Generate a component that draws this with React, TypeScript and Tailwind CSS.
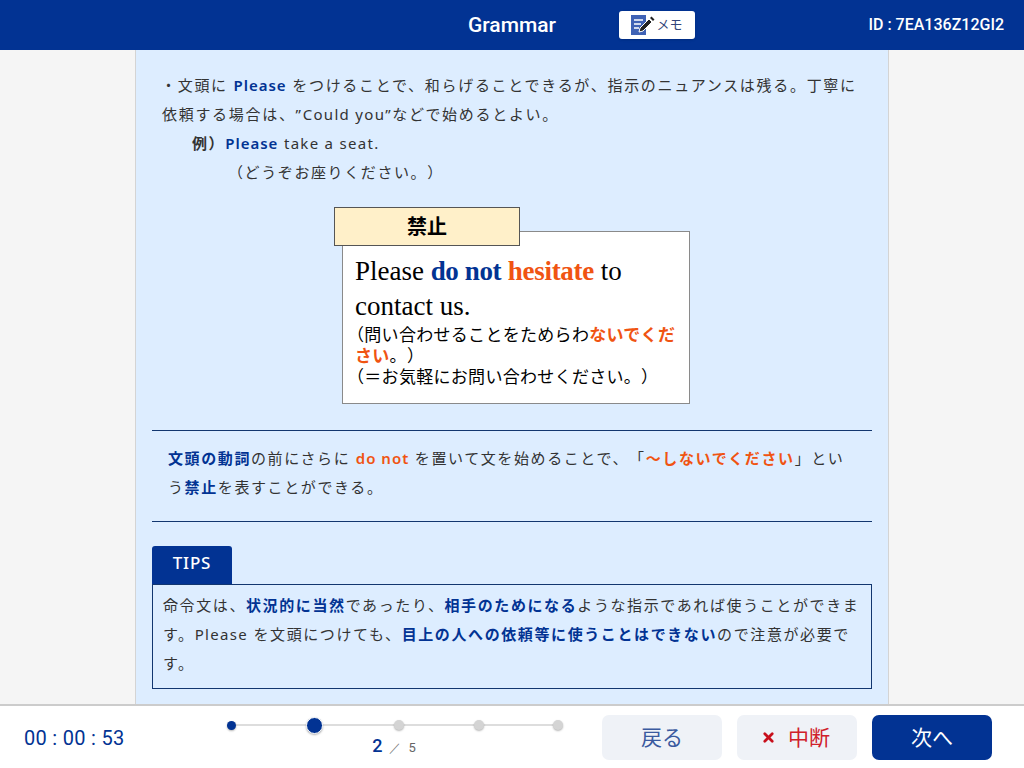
import { X } from "lucide-react";

const jp = "font-['Noto_Sans','Noto_Sans_CJK_JP',sans-serif]";

function MemoIcon() {
  return (
    <svg width="24" height="22" viewBox="0 0 24 22">
      <rect x="0" y="1" width="15" height="20" fill="#3f62b5" />
      <path d="M3 6h9M3 10h7M3 14h5" stroke="#fff" strokeWidth="1.5" />
      <path d="M8 18l1-4 9-9 3 3-9 9z" fill="#222" stroke="#fff" strokeWidth="1" />
      <path d="M19 4l1.5-1.5 3 3L22 7z" fill="#222" />
    </svg>
  );
}

function Dot({ className }: { className: string }) {
  return <span className={`z-10 rounded-full shadow-[0_1px_2px_rgba(0,0,0,0.3)] ${className}`} />;
}

export default function App() {
  return (
    <div className={`flex h-[768px] w-[1024px] flex-col overflow-hidden bg-[#f5f5f5] text-[#222] [text-spacing-trim:space-all] ${jp}`}>
      <header className="flex h-[50px] shrink-0 items-center bg-[#023393] text-white">
        <div className="ml-[468px] mt-[2px] w-[151px] font-['Roboto',sans-serif] text-[21px] font-medium">Grammar</div>
        <button className="flex h-[28px] w-[76px] items-center justify-center gap-[1px] rounded-[3px] bg-white text-[13px] text-[#33457a] shadow-sm">
          <MemoIcon />
          メモ
        </button>
        <div className="ml-auto mr-[20px] font-['Roboto',sans-serif] text-[16px] font-medium">ID : 7EA136Z12GI2</div>
      </header>

      <main className="mx-[135px] h-[654px] w-[754px] shrink-0 overflow-hidden border-x border-[#d4d4d4] bg-[#ddedff] px-[16px] pt-[21px]">
        <div className="px-[10px] text-[15px] leading-[29px] tracking-[1.6px] text-[#333]">
          <p className="tracking-[1.7px]">
            <span className="-ml-[1px]">・文頭に</span> <b className="font-semibold tracking-[1px] text-[#023393]">Please</b> をつけることで、和らげることできるが、指示のニュアンスは残る。丁寧に
            <br />
            依頼する場合は、”<span className="tracking-[1.3px]">Could you</span>”などで始めるとよい。
          </p>
          <p className="pl-[30px]">
            <b className="font-semibold">例）</b>
            <b className="font-semibold tracking-[1px] text-[#023393]">Please</b> <span className="tracking-[1.3px]">take a seat.</span>
          </p>
          <p className="pl-[66px]">（どうぞお座りください。）</p>
        </div>

        <div className="ml-[182px] mt-[20px] w-[356px]">
          <div className="relative z-10 flex h-[39px] w-[186px] items-center justify-center border border-[#555] bg-[#fff0c9] text-[20px] font-bold text-black">
            禁止
          </div>
          <div className="ml-[8px] mt-[-15px] h-[173px] w-[348px] border border-[#8a8a8a] bg-white px-[12px] pt-[22px] text-black">
            <p className="font-['Liberation_Serif',serif] text-[27px] leading-[35px]">
              Please <b className="tracking-[-0.4px] text-[#023393]">do not</b> <b className="tracking-[-0.3px] text-[#f05412]">hesitate</b> to
              <br />
              contact us.
            </p>
            <p className="text-[17px] leading-[21px] tracking-[0.3px]">
              <span className="-ml-[8px]">（</span>問い合わせることをためらわ<b className="font-semibold text-[#f05412]">ないでくだ</b>
              <br />
              <b className="font-semibold text-[#f05412]">さい</b>。）
              <br />
              <span className="-ml-[8px]">（</span>＝お気軽にお問い合わせください。）
            </p>
          </div>
        </div>

        <div className="mt-[26px] h-[92px] border-y border-[#12366f] px-[16px] pt-[13px] text-[15px] leading-[29px] tracking-[1.6px] text-[#333]">
          <b className="font-semibold text-[#023393]">文頭の動詞</b>の前にさらに <b className="font-semibold tracking-[1px] text-[#f05412]">do not</b> を置いて文を始めることで、「<b className="font-semibold text-[#f05412]">～しないでください</b>」とい
          <br />
          う<b className="font-semibold text-[#023393]">禁止</b>を表すことができる。
        </div>

        <div className="mt-[24px] flex h-[38px] w-[80px] items-center justify-center rounded-t-[3px] bg-[#023393] pb-[4px] text-[17px] font-medium tracking-[0.8px] text-white">
          TIPS
        </div>
        <div className="h-[105px] border border-[#12366f] px-[10px] pt-[6px] text-[15px] leading-[29px] tracking-[1.6px] text-[#333]">
          命令文は、<b className="font-semibold text-[#023393]">状況的に当然</b>であったり、<b className="font-semibold text-[#023393]">相手のためになる</b>ような指示であれば使うことができま
          <br />
          す。<span className="tracking-[1.3px]">Please</span> を文頭につけても、<b className="font-semibold text-[#023393]">目上の人への依頼等に使うことはできない</b>ので注意が必要で
          <br />
          す。
        </div>
      </main>

      <footer className="flex h-[64px] shrink-0 items-start border-t-2 border-[#cccccc] bg-white">
        <div className="ml-[24px] mt-[19px] w-[202px] font-['Roboto',sans-serif] text-[20px] font-normal leading-[26px] tracking-[0.3px] text-[#023393]">
          00 : 00 : 53
        </div>
        <div className="mt-[10px] w-[339px]">
          <div className="relative flex h-[18px] items-center pl-[1px]">
            <div className="absolute left-[4px] right-[4px] top-[8px] h-[2px] bg-[#dddddd]" />
            <Dot className="h-[9px] w-[9px] bg-[#023393]" />
            <Dot className="ml-[70px] h-[17px] w-[17px] border border-white bg-[#023393]" />
            <Dot className="ml-[71px] h-[10px] w-[10px] bg-[#d4d4d4]" />
            <Dot className="ml-[70px] h-[10px] w-[10px] bg-[#d4d4d4]" />
            <Dot className="ml-[69px] h-[10px] w-[10px] bg-[#d4d4d4]" />
          </div>
          <div className="mt-[1px] flex items-baseline justify-center gap-[7px] pr-[3px] font-['Roboto',sans-serif] text-[#023393]">
            <span className="text-[18px] font-medium leading-[22px]">2</span>
            <span className="text-[12px] text-[#777]">／</span>
            <span className="text-[13px] text-[#666]">5</span>
          </div>
        </div>
        <div className="ml-[37px] mt-[9px] flex gap-[15px] text-[21px]">
          <button className="h-[45px] w-[120px] rounded-[7px] bg-[#eff2f7] text-[#3a5a9f]">戻る</button>
          <button className="flex h-[45px] w-[120px] items-center justify-center gap-[12px] rounded-[7px] bg-[#eff2f7] pr-[3px] text-[#d0202a]">
            <X size={15} strokeWidth={4.5} className="text-[#c8101c]" />
            中断
          </button>
          <button className="h-[45px] w-[120px] rounded-[7px] bg-[#023393] text-white">次へ</button>
        </div>
      </footer>
    </div>
  );
}
